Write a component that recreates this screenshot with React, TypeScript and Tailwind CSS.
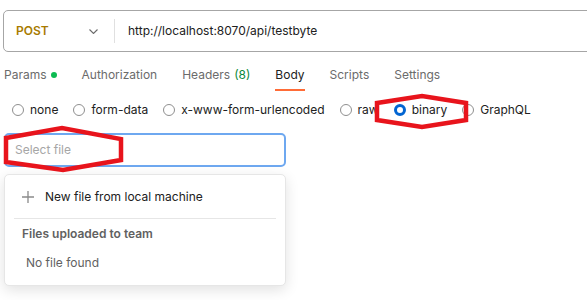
import React from 'react';

const TABS = [
  { label: 'Params', dot: true },
  { label: 'Authorization' },
  { label: 'Headers', count: '(8)' },
  { label: 'Body', active: true },
  { label: 'Scripts' },
  { label: 'Settings' },
];

const BODY_TYPES = ['none', 'form-data', 'x-www-form-urlencoded', 'raw', 'binary', 'GraphQL'];

function Radio({ checked }: { checked?: boolean }) {
  if (checked) {
    return <span className="w-3 h-3 rounded-full border-[3px] border-[#0265d2] bg-white shrink-0" />;
  }
  return <span className="w-3 h-3 rounded-full border border-[#8f8f8f] bg-white shrink-0" />;
}

export default function App() {
  return (
    <div className="relative w-[587px] h-[300px] bg-white overflow-hidden text-[12px] leading-[18px] text-[#212121]" style={{ fontFamily: 'Inter, "Noto Sans", sans-serif' }}>
      {/* Request bar */}
      <div className="ml-[3px] mt-[10px] w-[620px] h-[42px] border border-[#a6a6a6] rounded-[5px] flex items-center">
        <div className="w-[110px] flex items-center pl-[12px]">
          <span className="font-semibold text-[#a87b00] w-[73px]">POST</span>
          <svg width="9" height="5" viewBox="0 0 9 5" fill="none" stroke="#6b6b6b" strokeWidth="1.1">
            <path d="M0.5 0.5l4 4 4-4" />
          </svg>
        </div>
        <div className="w-px h-[24px] bg-[#e0e0e0]" />
        <span className="ml-[13px]">http://localhost:8070/api/testbyte</span>
      </div>

      {/* Tabs */}
      <div className="flex pt-[14px] pl-[4px]">
        {TABS.map((t) => (
          <div key={t.label} className="flex flex-col mr-[25px]">
            <div className={`flex items-center gap-[4px] ${t.active ? 'text-[#212121]' : 'text-[#6b6b6b]'}`}>
              <span>{t.label}</span>
              {t.count && <span className="text-[#0a8a3b]">{t.count}</span>}
              {t.dot && <span className="w-[6px] h-[6px] rounded-full bg-[#0cbb52]" />}
            </div>
            <div className={`mt-[5px] h-[2px] ${t.active ? 'bg-[#ff6c37]' : 'bg-transparent'}`} />
          </div>
        ))}
      </div>

      {/* Body types */}
      <div className="flex items-center h-[38px] pl-[12px]">
        {BODY_TYPES.map((b) => (
          <div key={b} className="flex items-center gap-[6px] mr-[15px]">
            <Radio checked={b === 'binary'} />
            <span>{b}</span>
          </div>
        ))}
      </div>

      {/* Select file */}
      <div className="ml-[4px] mt-[4px] w-[282px] h-[34px] border-2 border-[#6ea8f0] rounded-[5px] flex items-center pl-[9px] text-[#a6a6a6]">
        Select file
      </div>

      {/* Dropdown */}
      <div className="ml-[4px] mt-[7px] w-[282px] h-[112px] bg-white border border-[#e6e6e6] rounded-[5px] shadow-[0_4px_14px_rgba(0,0,0,0.12)] px-[9px]">
        <div className="flex items-center h-[43px] pl-[8px] gap-[11px]">
          <svg width="12" height="12" viewBox="0 0 12 12" stroke="#8a8a8a" strokeWidth="1.3">
            <path d="M6 0v12M0 6h12" />
          </svg>
          <span>New file from local machine</span>
        </div>
        <div className="h-px bg-[#e6e6e6]" />
        <div className="pl-[8px] pt-[6px] font-semibold text-[#616161]">Files uploaded to team</div>
        <div className="pl-[12px] pt-[11px] text-[#616161]">No file found</div>
      </div>

      {/* Annotations */}
      <svg className="absolute left-0 top-0 pointer-events-none" width="587" height="300" fill="none" stroke="#e8141c" strokeWidth="4.5" strokeLinejoin="miter">
        <path d="M377 103 L422 96 L466 103 L466 120 L422 127 L377 120 Z" />
        <path d="M6 138 L62 128 L121 139 L121 160 L63 170 L6 162 Z" />
      </svg>
    </div>
  );
}
